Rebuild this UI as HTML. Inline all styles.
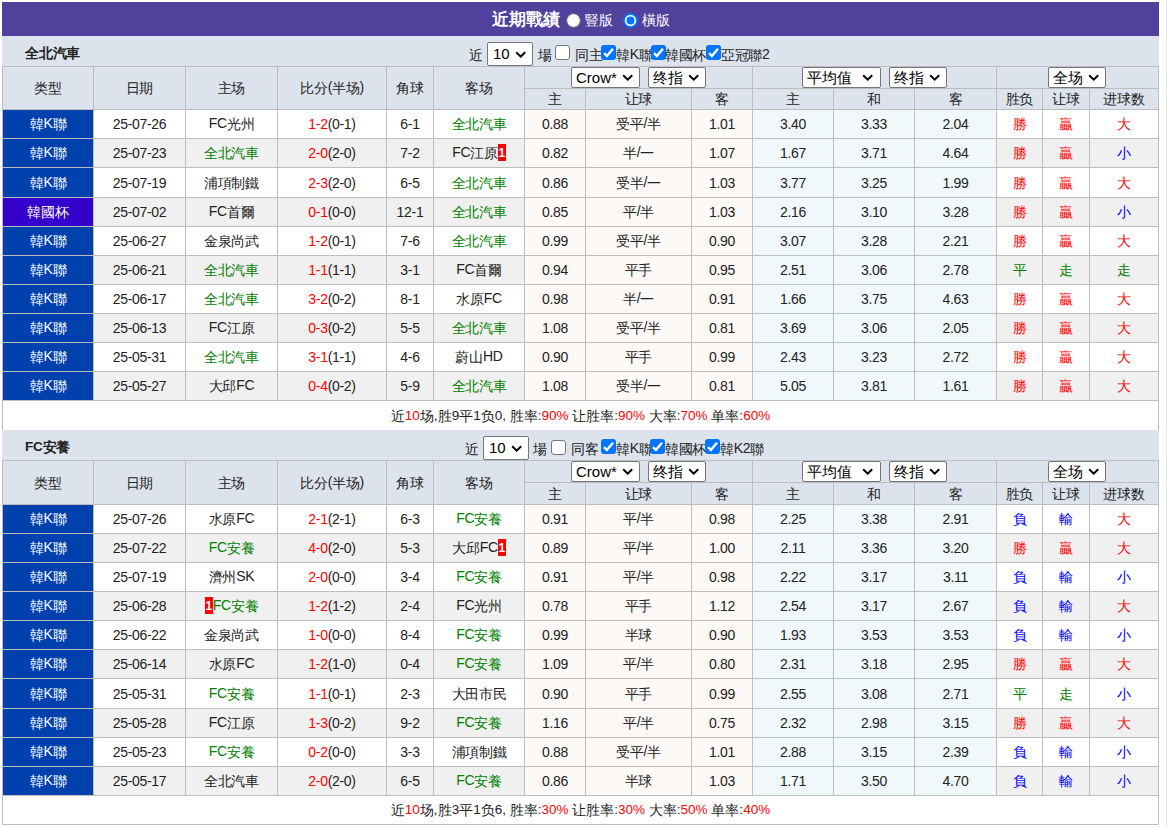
<!DOCTYPE html>
<html><head><meta charset="utf-8"><style>
html,body{margin:0;padding:0;background:#fff;width:1167px;height:827px;overflow:hidden;position:relative}
body{font-family:"Liberation Sans",sans-serif;font-size:14px;letter-spacing:-0.3px;color:#222}
.t{position:absolute;display:flex;align-items:center;justify-content:center;white-space:nowrap}
.sel{position:absolute;background:#fff;border:1px solid #767676;border-radius:2px;font-size:15px;letter-spacing:0;color:#000}
.c{position:relative;top:1px}
.rc{display:inline-block;vertical-align:top;background:#ff0000;color:#fff;font-weight:bold;font-size:12px;width:8px;height:17px;line-height:18px;text-align:center;position:relative;top:0px}
</style></head><body>
<div style="position:absolute;left:2px;top:2px;width:1157px;height:34px;background:#51409c;"></div><div class="t" style="left:492px;top:1px;width:70px;height:34px;color:#fff;font-size:17px;letter-spacing:0;justify-content:flex-start;"><span><b><span class="c">近期戰績</span></b></span></div><svg style="position:absolute;left:566px;top:13px" width="15" height="15" viewBox="0 0 15 15"><circle cx="7.5" cy="7.5" r="6.8" fill="#fff" stroke="#767676" stroke-width="1"/></svg><div class="t" style="left:585px;top:2px;width:35px;height:34px;color:#fff;justify-content:flex-start;padding-top:2px;box-sizing:border-box"><span><span class="c">豎版</span></span></div><svg style="position:absolute;left:623px;top:13px" width="15" height="15" viewBox="0 0 15 15"><circle cx="7.5" cy="7.5" r="6.6" fill="#fff" stroke="#0075ff" stroke-width="1.8"/><circle cx="7.5" cy="7.5" r="4" fill="#0075ff"/></svg><div class="t" style="left:642px;top:2px;width:38px;height:34px;color:#fff;justify-content:flex-start;padding-top:2px;box-sizing:border-box"><span><span class="c">橫版</span></span></div><div style="position:absolute;left:2px;top:36px;width:1157px;height:30px;background:#dce3ec;"></div><div class="t" style="left:25px;top:38px;width:175px;height:30px;color:#222;justify-content:flex-start;font-size:13.5px;letter-spacing:-0.2px;"><span><b><span class="c">全北汽車</span></b></span></div><div class="t" style="left:469px;top:36px;width:15px;height:30px;color:#222;justify-content:flex-start;padding-top:8px;box-sizing:border-box"><span><span class="c">近</span></span></div><div class="sel" style="left:487px;top:42px;width:44px;height:22px;"><span style="position:absolute;left:5px;top:0;line-height:22px">10</span></div><svg style="position:absolute;left:514.5px;top:51px" width="12" height="8" viewBox="0 0 12 8"><path d="M1.2 1.2 L5.7 5.7 L10.2 1.2" fill="none" stroke="#000" stroke-width="2"/></svg><div class="t" style="left:538px;top:36px;width:16px;height:30px;color:#222;justify-content:flex-start;padding-top:8px;box-sizing:border-box"><span><span class="c">場</span></span></div><div style="position:absolute;left:555px;top:45px;width:13px;height:13px;border-radius:3px;background:#fff;border:1px solid #767676"></div><div class="t" style="left:575px;top:36px;width:27px;height:30px;color:#222;justify-content:flex-start;padding-top:8px;box-sizing:border-box"><span><span class="c">同主</span></span></div><div style="position:absolute;left:601px;top:45px;width:15px;height:15px;border-radius:3px;background:#0075ff"><svg width="15" height="15" viewBox="0 0 15 15" style="position:absolute;left:0;top:0"><path d="M3.1 8.1 L5.9 11 L12 3.7" fill="none" stroke="#fff" stroke-width="2.4"/></svg></div><div class="t" style="left:616px;top:36px;width:36px;height:30px;color:#222;justify-content:flex-start;padding-top:8px;box-sizing:border-box"><span><span class="c">韓</span>K<span class="c">聯</span></span></div><div style="position:absolute;left:651px;top:45px;width:15px;height:15px;border-radius:3px;background:#0075ff"><svg width="15" height="15" viewBox="0 0 15 15" style="position:absolute;left:0;top:0"><path d="M3.1 8.1 L5.9 11 L12 3.7" fill="none" stroke="#fff" stroke-width="2.4"/></svg></div><div class="t" style="left:665px;top:36px;width:43px;height:30px;color:#222;justify-content:flex-start;padding-top:8px;box-sizing:border-box"><span><span class="c">韓國杯</span></span></div><div style="position:absolute;left:706px;top:45px;width:15px;height:15px;border-radius:3px;background:#0075ff"><svg width="15" height="15" viewBox="0 0 15 15" style="position:absolute;left:0;top:0"><path d="M3.1 8.1 L5.9 11 L12 3.7" fill="none" stroke="#fff" stroke-width="2.4"/></svg></div><div class="t" style="left:721px;top:36px;width:59px;height:30px;color:#222;justify-content:flex-start;padding-top:8px;box-sizing:border-box"><span><span class="c">亞冠聯</span>2</span></div><div style="position:absolute;left:2px;top:66px;width:1157px;height:43px;background:#dce3ec;"></div><div style="position:absolute;left:2px;top:110px;width:1157px;height:28px;background:#fff;"></div><div style="position:absolute;left:525px;top:110px;width:227px;height:28px;background:#fdf9f6;"></div><div style="position:absolute;left:753px;top:110px;width:243px;height:28px;background:#f0f8fc;"></div><div style="position:absolute;left:3px;top:110px;width:90px;height:28px;background:#0041ae;"></div><div style="position:absolute;left:2px;top:139px;width:1157px;height:28px;background:#f0f0f0;"></div><div style="position:absolute;left:525px;top:139px;width:227px;height:28px;background:#fdf9f6;"></div><div style="position:absolute;left:753px;top:139px;width:243px;height:28px;background:#f0f8fc;"></div><div style="position:absolute;left:3px;top:139px;width:90px;height:28px;background:#0041ae;"></div><div style="position:absolute;left:2px;top:168px;width:1157px;height:29px;background:#fff;"></div><div style="position:absolute;left:525px;top:168px;width:227px;height:29px;background:#fdf9f6;"></div><div style="position:absolute;left:753px;top:168px;width:243px;height:29px;background:#f0f8fc;"></div><div style="position:absolute;left:3px;top:168px;width:90px;height:29px;background:#0041ae;"></div><div style="position:absolute;left:2px;top:198px;width:1157px;height:28px;background:#f0f0f0;"></div><div style="position:absolute;left:525px;top:198px;width:227px;height:28px;background:#fdf9f6;"></div><div style="position:absolute;left:753px;top:198px;width:243px;height:28px;background:#f0f8fc;"></div><div style="position:absolute;left:3px;top:198px;width:90px;height:28px;background:#3300cc;"></div><div style="position:absolute;left:2px;top:227px;width:1157px;height:28px;background:#fff;"></div><div style="position:absolute;left:525px;top:227px;width:227px;height:28px;background:#fdf9f6;"></div><div style="position:absolute;left:753px;top:227px;width:243px;height:28px;background:#f0f8fc;"></div><div style="position:absolute;left:3px;top:227px;width:90px;height:28px;background:#0041ae;"></div><div style="position:absolute;left:2px;top:256px;width:1157px;height:28px;background:#f0f0f0;"></div><div style="position:absolute;left:525px;top:256px;width:227px;height:28px;background:#fdf9f6;"></div><div style="position:absolute;left:753px;top:256px;width:243px;height:28px;background:#f0f8fc;"></div><div style="position:absolute;left:3px;top:256px;width:90px;height:28px;background:#0041ae;"></div><div style="position:absolute;left:2px;top:285px;width:1157px;height:28px;background:#fff;"></div><div style="position:absolute;left:525px;top:285px;width:227px;height:28px;background:#fdf9f6;"></div><div style="position:absolute;left:753px;top:285px;width:243px;height:28px;background:#f0f8fc;"></div><div style="position:absolute;left:3px;top:285px;width:90px;height:28px;background:#0041ae;"></div><div style="position:absolute;left:2px;top:314px;width:1157px;height:28px;background:#f0f0f0;"></div><div style="position:absolute;left:525px;top:314px;width:227px;height:28px;background:#fdf9f6;"></div><div style="position:absolute;left:753px;top:314px;width:243px;height:28px;background:#f0f8fc;"></div><div style="position:absolute;left:3px;top:314px;width:90px;height:28px;background:#0041ae;"></div><div style="position:absolute;left:2px;top:343px;width:1157px;height:28px;background:#fff;"></div><div style="position:absolute;left:525px;top:343px;width:227px;height:28px;background:#fdf9f6;"></div><div style="position:absolute;left:753px;top:343px;width:243px;height:28px;background:#f0f8fc;"></div><div style="position:absolute;left:3px;top:343px;width:90px;height:28px;background:#0041ae;"></div><div style="position:absolute;left:2px;top:372px;width:1157px;height:28px;background:#f0f0f0;"></div><div style="position:absolute;left:525px;top:372px;width:227px;height:28px;background:#fdf9f6;"></div><div style="position:absolute;left:753px;top:372px;width:243px;height:28px;background:#f0f8fc;"></div><div style="position:absolute;left:3px;top:372px;width:90px;height:28px;background:#0041ae;"></div><div style="position:absolute;left:2px;top:401px;width:1157px;height:29px;background:#fff;"></div><div style="position:absolute;left:2px;top:66px;width:1157px;height:1px;background:#bdbdbd;"></div><div style="position:absolute;left:2px;top:109px;width:1157px;height:1px;background:#bdbdbd;"></div><div style="position:absolute;left:2px;top:138px;width:1157px;height:1px;background:#bdbdbd;"></div><div style="position:absolute;left:2px;top:167px;width:1157px;height:1px;background:#bdbdbd;"></div><div style="position:absolute;left:2px;top:197px;width:1157px;height:1px;background:#bdbdbd;"></div><div style="position:absolute;left:2px;top:226px;width:1157px;height:1px;background:#bdbdbd;"></div><div style="position:absolute;left:2px;top:255px;width:1157px;height:1px;background:#bdbdbd;"></div><div style="position:absolute;left:2px;top:284px;width:1157px;height:1px;background:#bdbdbd;"></div><div style="position:absolute;left:2px;top:313px;width:1157px;height:1px;background:#bdbdbd;"></div><div style="position:absolute;left:2px;top:342px;width:1157px;height:1px;background:#bdbdbd;"></div><div style="position:absolute;left:2px;top:371px;width:1157px;height:1px;background:#bdbdbd;"></div><div style="position:absolute;left:2px;top:400px;width:1157px;height:1px;background:#bdbdbd;"></div><div style="position:absolute;left:2px;top:430px;width:1157px;height:1px;background:#bdbdbd;"></div><div style="position:absolute;left:524px;top:88px;width:635px;height:1px;background:#bdbdbd;"></div><div style="position:absolute;left:2px;top:66px;width:1px;height:364px;background:#bdbdbd;"></div><div style="position:absolute;left:93px;top:66px;width:1px;height:334px;background:#bdbdbd;"></div><div style="position:absolute;left:185px;top:66px;width:1px;height:334px;background:#bdbdbd;"></div><div style="position:absolute;left:277px;top:66px;width:1px;height:334px;background:#bdbdbd;"></div><div style="position:absolute;left:386px;top:66px;width:1px;height:334px;background:#bdbdbd;"></div><div style="position:absolute;left:433px;top:66px;width:1px;height:334px;background:#bdbdbd;"></div><div style="position:absolute;left:524px;top:66px;width:1px;height:334px;background:#bdbdbd;"></div><div style="position:absolute;left:585px;top:88px;width:1px;height:312px;background:#bdbdbd;"></div><div style="position:absolute;left:691px;top:88px;width:1px;height:312px;background:#bdbdbd;"></div><div style="position:absolute;left:752px;top:66px;width:1px;height:334px;background:#bdbdbd;"></div><div style="position:absolute;left:833px;top:88px;width:1px;height:312px;background:#bdbdbd;"></div><div style="position:absolute;left:914px;top:88px;width:1px;height:312px;background:#bdbdbd;"></div><div style="position:absolute;left:996px;top:66px;width:1px;height:334px;background:#bdbdbd;"></div><div style="position:absolute;left:1042px;top:88px;width:1px;height:312px;background:#bdbdbd;"></div><div style="position:absolute;left:1089px;top:88px;width:1px;height:312px;background:#bdbdbd;"></div><div style="position:absolute;left:1158px;top:66px;width:1px;height:364px;background:#bdbdbd;"></div><div class="t" style="left:3px;top:67px;width:90px;height:42px;color:#222;"><span><span class="c">类型</span></span></div><div class="t" style="left:94px;top:67px;width:91px;height:42px;color:#222;"><span><span class="c">日期</span></span></div><div class="t" style="left:186px;top:67px;width:91px;height:42px;color:#222;"><span><span class="c">主场</span></span></div><div class="t" style="left:278px;top:67px;width:108px;height:42px;color:#222;"><span><span class="c">比分</span>(<span class="c">半场</span>)</span></div><div class="t" style="left:387px;top:67px;width:46px;height:42px;color:#222;"><span><span class="c">角球</span></span></div><div class="t" style="left:434px;top:67px;width:90px;height:42px;color:#222;"><span><span class="c">客场</span></span></div><div class="t" style="left:525px;top:89px;width:60px;height:20px;color:#222;"><span><span class="c">主</span></span></div><div class="t" style="left:586px;top:89px;width:105px;height:20px;color:#222;"><span><span class="c">让球</span></span></div><div class="t" style="left:692px;top:89px;width:60px;height:20px;color:#222;"><span><span class="c">客</span></span></div><div class="t" style="left:753px;top:89px;width:80px;height:20px;color:#222;"><span><span class="c">主</span></span></div><div class="t" style="left:834px;top:89px;width:80px;height:20px;color:#222;"><span><span class="c">和</span></span></div><div class="t" style="left:915px;top:89px;width:81px;height:20px;color:#222;"><span><span class="c">客</span></span></div><div class="t" style="left:997px;top:89px;width:45px;height:20px;color:#222;"><span><span class="c">胜负</span></span></div><div class="t" style="left:1043px;top:89px;width:46px;height:20px;color:#222;"><span><span class="c">让球</span></span></div><div class="t" style="left:1090px;top:89px;width:68px;height:20px;color:#222;"><span><span class="c">进球数</span></span></div><div class="sel" style="left:571px;top:67px;width:67px;height:19px;"><span style="position:absolute;left:4px;top:0;line-height:19px">Crow*</span></div><svg style="position:absolute;left:621.5px;top:74px" width="12" height="8" viewBox="0 0 12 8"><path d="M1.2 1.2 L5.7 5.7 L10.2 1.2" fill="none" stroke="#000" stroke-width="2"/></svg><div class="sel" style="left:648px;top:67px;width:56px;height:19px;"><span style="position:absolute;left:4px;top:0;line-height:19px">终指</span></div><svg style="position:absolute;left:687.5px;top:74px" width="12" height="8" viewBox="0 0 12 8"><path d="M1.2 1.2 L5.7 5.7 L10.2 1.2" fill="none" stroke="#000" stroke-width="2"/></svg><div class="sel" style="left:802px;top:67px;width:77px;height:19px;"><span style="position:absolute;left:4px;top:0;line-height:19px">平均值</span></div><svg style="position:absolute;left:861.5px;top:74px" width="12" height="8" viewBox="0 0 12 8"><path d="M1.2 1.2 L5.7 5.7 L10.2 1.2" fill="none" stroke="#000" stroke-width="2"/></svg><div class="sel" style="left:889px;top:67px;width:56px;height:19px;"><span style="position:absolute;left:4px;top:0;line-height:19px">终指</span></div><svg style="position:absolute;left:928.5px;top:74px" width="12" height="8" viewBox="0 0 12 8"><path d="M1.2 1.2 L5.7 5.7 L10.2 1.2" fill="none" stroke="#000" stroke-width="2"/></svg><div class="sel" style="left:1048px;top:67px;width:56px;height:19px;"><span style="position:absolute;left:4px;top:0;line-height:19px">全场</span></div><svg style="position:absolute;left:1087.5px;top:74px" width="12" height="8" viewBox="0 0 12 8"><path d="M1.2 1.2 L5.7 5.7 L10.2 1.2" fill="none" stroke="#000" stroke-width="2"/></svg><div class="t" style="left:3px;top:110px;width:90px;height:28px;color:#fff;"><span><span class="c">韓</span>K<span class="c">聯</span></span></div><div class="t" style="left:94px;top:110px;width:91px;height:28px;color:#222;"><span>25-07-26</span></div><div class="t" style="left:186px;top:110px;width:91px;height:28px;color:#222;"><span>FC<span class="c">光州</span></span></div><div class="t" style="left:278px;top:110px;width:108px;height:28px;color:#222;"><span><span style="color:#ff0000">1-2</span>(0-1)</span></div><div class="t" style="left:387px;top:110px;width:46px;height:28px;color:#222;"><span>6-1</span></div><div class="t" style="left:434px;top:110px;width:90px;height:28px;color:#008000;"><span><span class="c">全北汽車</span></span></div><div class="t" style="left:525px;top:110px;width:60px;height:28px;color:#222;"><span>0.88</span></div><div class="t" style="left:586px;top:110px;width:105px;height:28px;color:#222;"><span><span class="c">受平</span>/<span class="c">半</span></span></div><div class="t" style="left:692px;top:110px;width:60px;height:28px;color:#222;"><span>1.01</span></div><div class="t" style="left:753px;top:110px;width:80px;height:28px;color:#222;"><span>3.40</span></div><div class="t" style="left:834px;top:110px;width:80px;height:28px;color:#222;"><span>3.33</span></div><div class="t" style="left:915px;top:110px;width:81px;height:28px;color:#222;"><span>2.04</span></div><div class="t" style="left:997px;top:110px;width:45px;height:28px;color:#ff0000;"><span><span class="c">勝</span></span></div><div class="t" style="left:1043px;top:110px;width:46px;height:28px;color:#ff0000;"><span><span class="c">贏</span></span></div><div class="t" style="left:1090px;top:110px;width:68px;height:28px;color:#ff0000;"><span><span class="c">大</span></span></div><div class="t" style="left:3px;top:139px;width:90px;height:28px;color:#fff;"><span><span class="c">韓</span>K<span class="c">聯</span></span></div><div class="t" style="left:94px;top:139px;width:91px;height:28px;color:#222;"><span>25-07-23</span></div><div class="t" style="left:186px;top:139px;width:91px;height:28px;color:#008000;"><span><span class="c">全北汽車</span></span></div><div class="t" style="left:278px;top:139px;width:108px;height:28px;color:#222;"><span><span style="color:#ff0000">2-0</span>(2-0)</span></div><div class="t" style="left:387px;top:139px;width:46px;height:28px;color:#222;"><span>7-2</span></div><div class="t" style="left:434px;top:139px;width:90px;height:28px;color:#222;"><span>FC<span class="c">江原</span><span class="rc">1</span></span></div><div class="t" style="left:525px;top:139px;width:60px;height:28px;color:#222;"><span>0.82</span></div><div class="t" style="left:586px;top:139px;width:105px;height:28px;color:#222;"><span><span class="c">半</span>/<span class="c">一</span></span></div><div class="t" style="left:692px;top:139px;width:60px;height:28px;color:#222;"><span>1.07</span></div><div class="t" style="left:753px;top:139px;width:80px;height:28px;color:#222;"><span>1.67</span></div><div class="t" style="left:834px;top:139px;width:80px;height:28px;color:#222;"><span>3.71</span></div><div class="t" style="left:915px;top:139px;width:81px;height:28px;color:#222;"><span>4.64</span></div><div class="t" style="left:997px;top:139px;width:45px;height:28px;color:#ff0000;"><span><span class="c">勝</span></span></div><div class="t" style="left:1043px;top:139px;width:46px;height:28px;color:#ff0000;"><span><span class="c">贏</span></span></div><div class="t" style="left:1090px;top:139px;width:68px;height:28px;color:#0000ff;"><span><span class="c">小</span></span></div><div class="t" style="left:3px;top:168px;width:90px;height:29px;color:#fff;"><span><span class="c">韓</span>K<span class="c">聯</span></span></div><div class="t" style="left:94px;top:168px;width:91px;height:29px;color:#222;"><span>25-07-19</span></div><div class="t" style="left:186px;top:168px;width:91px;height:29px;color:#222;"><span><span class="c">浦項制鐵</span></span></div><div class="t" style="left:278px;top:168px;width:108px;height:29px;color:#222;"><span><span style="color:#ff0000">2-3</span>(2-0)</span></div><div class="t" style="left:387px;top:168px;width:46px;height:29px;color:#222;"><span>6-5</span></div><div class="t" style="left:434px;top:168px;width:90px;height:29px;color:#008000;"><span><span class="c">全北汽車</span></span></div><div class="t" style="left:525px;top:168px;width:60px;height:29px;color:#222;"><span>0.86</span></div><div class="t" style="left:586px;top:168px;width:105px;height:29px;color:#222;"><span><span class="c">受半</span>/<span class="c">一</span></span></div><div class="t" style="left:692px;top:168px;width:60px;height:29px;color:#222;"><span>1.03</span></div><div class="t" style="left:753px;top:168px;width:80px;height:29px;color:#222;"><span>3.77</span></div><div class="t" style="left:834px;top:168px;width:80px;height:29px;color:#222;"><span>3.25</span></div><div class="t" style="left:915px;top:168px;width:81px;height:29px;color:#222;"><span>1.99</span></div><div class="t" style="left:997px;top:168px;width:45px;height:29px;color:#ff0000;"><span><span class="c">勝</span></span></div><div class="t" style="left:1043px;top:168px;width:46px;height:29px;color:#ff0000;"><span><span class="c">贏</span></span></div><div class="t" style="left:1090px;top:168px;width:68px;height:29px;color:#ff0000;"><span><span class="c">大</span></span></div><div class="t" style="left:3px;top:198px;width:90px;height:28px;color:#fff;"><span><span class="c">韓國杯</span></span></div><div class="t" style="left:94px;top:198px;width:91px;height:28px;color:#222;"><span>25-07-02</span></div><div class="t" style="left:186px;top:198px;width:91px;height:28px;color:#222;"><span>FC<span class="c">首爾</span></span></div><div class="t" style="left:278px;top:198px;width:108px;height:28px;color:#222;"><span><span style="color:#ff0000">0-1</span>(0-0)</span></div><div class="t" style="left:387px;top:198px;width:46px;height:28px;color:#222;"><span>12-1</span></div><div class="t" style="left:434px;top:198px;width:90px;height:28px;color:#008000;"><span><span class="c">全北汽車</span></span></div><div class="t" style="left:525px;top:198px;width:60px;height:28px;color:#222;"><span>0.85</span></div><div class="t" style="left:586px;top:198px;width:105px;height:28px;color:#222;"><span><span class="c">平</span>/<span class="c">半</span></span></div><div class="t" style="left:692px;top:198px;width:60px;height:28px;color:#222;"><span>1.03</span></div><div class="t" style="left:753px;top:198px;width:80px;height:28px;color:#222;"><span>2.16</span></div><div class="t" style="left:834px;top:198px;width:80px;height:28px;color:#222;"><span>3.10</span></div><div class="t" style="left:915px;top:198px;width:81px;height:28px;color:#222;"><span>3.28</span></div><div class="t" style="left:997px;top:198px;width:45px;height:28px;color:#ff0000;"><span><span class="c">勝</span></span></div><div class="t" style="left:1043px;top:198px;width:46px;height:28px;color:#ff0000;"><span><span class="c">贏</span></span></div><div class="t" style="left:1090px;top:198px;width:68px;height:28px;color:#0000ff;"><span><span class="c">小</span></span></div><div class="t" style="left:3px;top:227px;width:90px;height:28px;color:#fff;"><span><span class="c">韓</span>K<span class="c">聯</span></span></div><div class="t" style="left:94px;top:227px;width:91px;height:28px;color:#222;"><span>25-06-27</span></div><div class="t" style="left:186px;top:227px;width:91px;height:28px;color:#222;"><span><span class="c">金泉尚武</span></span></div><div class="t" style="left:278px;top:227px;width:108px;height:28px;color:#222;"><span><span style="color:#ff0000">1-2</span>(0-1)</span></div><div class="t" style="left:387px;top:227px;width:46px;height:28px;color:#222;"><span>7-6</span></div><div class="t" style="left:434px;top:227px;width:90px;height:28px;color:#008000;"><span><span class="c">全北汽車</span></span></div><div class="t" style="left:525px;top:227px;width:60px;height:28px;color:#222;"><span>0.99</span></div><div class="t" style="left:586px;top:227px;width:105px;height:28px;color:#222;"><span><span class="c">受平</span>/<span class="c">半</span></span></div><div class="t" style="left:692px;top:227px;width:60px;height:28px;color:#222;"><span>0.90</span></div><div class="t" style="left:753px;top:227px;width:80px;height:28px;color:#222;"><span>3.07</span></div><div class="t" style="left:834px;top:227px;width:80px;height:28px;color:#222;"><span>3.28</span></div><div class="t" style="left:915px;top:227px;width:81px;height:28px;color:#222;"><span>2.21</span></div><div class="t" style="left:997px;top:227px;width:45px;height:28px;color:#ff0000;"><span><span class="c">勝</span></span></div><div class="t" style="left:1043px;top:227px;width:46px;height:28px;color:#ff0000;"><span><span class="c">贏</span></span></div><div class="t" style="left:1090px;top:227px;width:68px;height:28px;color:#ff0000;"><span><span class="c">大</span></span></div><div class="t" style="left:3px;top:256px;width:90px;height:28px;color:#fff;"><span><span class="c">韓</span>K<span class="c">聯</span></span></div><div class="t" style="left:94px;top:256px;width:91px;height:28px;color:#222;"><span>25-06-21</span></div><div class="t" style="left:186px;top:256px;width:91px;height:28px;color:#008000;"><span><span class="c">全北汽車</span></span></div><div class="t" style="left:278px;top:256px;width:108px;height:28px;color:#222;"><span><span style="color:#ff0000">1-1</span>(1-1)</span></div><div class="t" style="left:387px;top:256px;width:46px;height:28px;color:#222;"><span>3-1</span></div><div class="t" style="left:434px;top:256px;width:90px;height:28px;color:#222;"><span>FC<span class="c">首爾</span></span></div><div class="t" style="left:525px;top:256px;width:60px;height:28px;color:#222;"><span>0.94</span></div><div class="t" style="left:586px;top:256px;width:105px;height:28px;color:#222;"><span><span class="c">平手</span></span></div><div class="t" style="left:692px;top:256px;width:60px;height:28px;color:#222;"><span>0.95</span></div><div class="t" style="left:753px;top:256px;width:80px;height:28px;color:#222;"><span>2.51</span></div><div class="t" style="left:834px;top:256px;width:80px;height:28px;color:#222;"><span>3.06</span></div><div class="t" style="left:915px;top:256px;width:81px;height:28px;color:#222;"><span>2.78</span></div><div class="t" style="left:997px;top:256px;width:45px;height:28px;color:#008000;"><span><span class="c">平</span></span></div><div class="t" style="left:1043px;top:256px;width:46px;height:28px;color:#008000;"><span><span class="c">走</span></span></div><div class="t" style="left:1090px;top:256px;width:68px;height:28px;color:#008000;"><span><span class="c">走</span></span></div><div class="t" style="left:3px;top:285px;width:90px;height:28px;color:#fff;"><span><span class="c">韓</span>K<span class="c">聯</span></span></div><div class="t" style="left:94px;top:285px;width:91px;height:28px;color:#222;"><span>25-06-17</span></div><div class="t" style="left:186px;top:285px;width:91px;height:28px;color:#008000;"><span><span class="c">全北汽車</span></span></div><div class="t" style="left:278px;top:285px;width:108px;height:28px;color:#222;"><span><span style="color:#ff0000">3-2</span>(0-2)</span></div><div class="t" style="left:387px;top:285px;width:46px;height:28px;color:#222;"><span>8-1</span></div><div class="t" style="left:434px;top:285px;width:90px;height:28px;color:#222;"><span><span class="c">水原</span>FC</span></div><div class="t" style="left:525px;top:285px;width:60px;height:28px;color:#222;"><span>0.98</span></div><div class="t" style="left:586px;top:285px;width:105px;height:28px;color:#222;"><span><span class="c">半</span>/<span class="c">一</span></span></div><div class="t" style="left:692px;top:285px;width:60px;height:28px;color:#222;"><span>0.91</span></div><div class="t" style="left:753px;top:285px;width:80px;height:28px;color:#222;"><span>1.66</span></div><div class="t" style="left:834px;top:285px;width:80px;height:28px;color:#222;"><span>3.75</span></div><div class="t" style="left:915px;top:285px;width:81px;height:28px;color:#222;"><span>4.63</span></div><div class="t" style="left:997px;top:285px;width:45px;height:28px;color:#ff0000;"><span><span class="c">勝</span></span></div><div class="t" style="left:1043px;top:285px;width:46px;height:28px;color:#ff0000;"><span><span class="c">贏</span></span></div><div class="t" style="left:1090px;top:285px;width:68px;height:28px;color:#ff0000;"><span><span class="c">大</span></span></div><div class="t" style="left:3px;top:314px;width:90px;height:28px;color:#fff;"><span><span class="c">韓</span>K<span class="c">聯</span></span></div><div class="t" style="left:94px;top:314px;width:91px;height:28px;color:#222;"><span>25-06-13</span></div><div class="t" style="left:186px;top:314px;width:91px;height:28px;color:#222;"><span>FC<span class="c">江原</span></span></div><div class="t" style="left:278px;top:314px;width:108px;height:28px;color:#222;"><span><span style="color:#ff0000">0-3</span>(0-2)</span></div><div class="t" style="left:387px;top:314px;width:46px;height:28px;color:#222;"><span>5-5</span></div><div class="t" style="left:434px;top:314px;width:90px;height:28px;color:#008000;"><span><span class="c">全北汽車</span></span></div><div class="t" style="left:525px;top:314px;width:60px;height:28px;color:#222;"><span>1.08</span></div><div class="t" style="left:586px;top:314px;width:105px;height:28px;color:#222;"><span><span class="c">受平</span>/<span class="c">半</span></span></div><div class="t" style="left:692px;top:314px;width:60px;height:28px;color:#222;"><span>0.81</span></div><div class="t" style="left:753px;top:314px;width:80px;height:28px;color:#222;"><span>3.69</span></div><div class="t" style="left:834px;top:314px;width:80px;height:28px;color:#222;"><span>3.06</span></div><div class="t" style="left:915px;top:314px;width:81px;height:28px;color:#222;"><span>2.05</span></div><div class="t" style="left:997px;top:314px;width:45px;height:28px;color:#ff0000;"><span><span class="c">勝</span></span></div><div class="t" style="left:1043px;top:314px;width:46px;height:28px;color:#ff0000;"><span><span class="c">贏</span></span></div><div class="t" style="left:1090px;top:314px;width:68px;height:28px;color:#ff0000;"><span><span class="c">大</span></span></div><div class="t" style="left:3px;top:343px;width:90px;height:28px;color:#fff;"><span><span class="c">韓</span>K<span class="c">聯</span></span></div><div class="t" style="left:94px;top:343px;width:91px;height:28px;color:#222;"><span>25-05-31</span></div><div class="t" style="left:186px;top:343px;width:91px;height:28px;color:#008000;"><span><span class="c">全北汽車</span></span></div><div class="t" style="left:278px;top:343px;width:108px;height:28px;color:#222;"><span><span style="color:#ff0000">3-1</span>(1-1)</span></div><div class="t" style="left:387px;top:343px;width:46px;height:28px;color:#222;"><span>4-6</span></div><div class="t" style="left:434px;top:343px;width:90px;height:28px;color:#222;"><span><span class="c">蔚山</span>HD</span></div><div class="t" style="left:525px;top:343px;width:60px;height:28px;color:#222;"><span>0.90</span></div><div class="t" style="left:586px;top:343px;width:105px;height:28px;color:#222;"><span><span class="c">平手</span></span></div><div class="t" style="left:692px;top:343px;width:60px;height:28px;color:#222;"><span>0.99</span></div><div class="t" style="left:753px;top:343px;width:80px;height:28px;color:#222;"><span>2.43</span></div><div class="t" style="left:834px;top:343px;width:80px;height:28px;color:#222;"><span>3.23</span></div><div class="t" style="left:915px;top:343px;width:81px;height:28px;color:#222;"><span>2.72</span></div><div class="t" style="left:997px;top:343px;width:45px;height:28px;color:#ff0000;"><span><span class="c">勝</span></span></div><div class="t" style="left:1043px;top:343px;width:46px;height:28px;color:#ff0000;"><span><span class="c">贏</span></span></div><div class="t" style="left:1090px;top:343px;width:68px;height:28px;color:#ff0000;"><span><span class="c">大</span></span></div><div class="t" style="left:3px;top:372px;width:90px;height:28px;color:#fff;"><span><span class="c">韓</span>K<span class="c">聯</span></span></div><div class="t" style="left:94px;top:372px;width:91px;height:28px;color:#222;"><span>25-05-27</span></div><div class="t" style="left:186px;top:372px;width:91px;height:28px;color:#222;"><span><span class="c">大邱</span>FC</span></div><div class="t" style="left:278px;top:372px;width:108px;height:28px;color:#222;"><span><span style="color:#ff0000">0-4</span>(0-2)</span></div><div class="t" style="left:387px;top:372px;width:46px;height:28px;color:#222;"><span>5-9</span></div><div class="t" style="left:434px;top:372px;width:90px;height:28px;color:#008000;"><span><span class="c">全北汽車</span></span></div><div class="t" style="left:525px;top:372px;width:60px;height:28px;color:#222;"><span>1.08</span></div><div class="t" style="left:586px;top:372px;width:105px;height:28px;color:#222;"><span><span class="c">受半</span>/<span class="c">一</span></span></div><div class="t" style="left:692px;top:372px;width:60px;height:28px;color:#222;"><span>0.81</span></div><div class="t" style="left:753px;top:372px;width:80px;height:28px;color:#222;"><span>5.05</span></div><div class="t" style="left:834px;top:372px;width:80px;height:28px;color:#222;"><span>3.81</span></div><div class="t" style="left:915px;top:372px;width:81px;height:28px;color:#222;"><span>1.61</span></div><div class="t" style="left:997px;top:372px;width:45px;height:28px;color:#ff0000;"><span><span class="c">勝</span></span></div><div class="t" style="left:1043px;top:372px;width:46px;height:28px;color:#ff0000;"><span><span class="c">贏</span></span></div><div class="t" style="left:1090px;top:372px;width:68px;height:28px;color:#ff0000;"><span><span class="c">大</span></span></div><div class="t" style="left:3px;top:401px;width:1155px;height:29px;color:#222;font-size:13.5px;letter-spacing:0;"><span><span class="c">近</span><span style="color:#ff0000">10</span><span class="c">场</span>,<span class="c">胜</span>9<span class="c">平</span>1<span class="c">负</span>0, <span class="c">胜率</span>:<span style="color:#ff0000">90%</span> <span class="c">让胜率</span>:<span style="color:#ff0000">90%</span> <span class="c">大率</span>:<span style="color:#ff0000">70%</span> <span class="c">单率</span>:<span style="color:#ff0000">60%</span></span></div><div style="position:absolute;left:2px;top:430px;width:1157px;height:30px;background:#dce3ec;"></div><div class="t" style="left:25px;top:432px;width:175px;height:30px;color:#222;justify-content:flex-start;font-size:13.5px;letter-spacing:-0.2px;"><span><b>FC<span class="c">安養</span></b></span></div><div class="t" style="left:465px;top:430px;width:15px;height:30px;color:#222;justify-content:flex-start;padding-top:8px;box-sizing:border-box"><span><span class="c">近</span></span></div><div class="sel" style="left:483px;top:436px;width:44px;height:22px;"><span style="position:absolute;left:5px;top:0;line-height:22px">10</span></div><svg style="position:absolute;left:510.5px;top:445px" width="12" height="8" viewBox="0 0 12 8"><path d="M1.2 1.2 L5.7 5.7 L10.2 1.2" fill="none" stroke="#000" stroke-width="2"/></svg><div class="t" style="left:533px;top:430px;width:17px;height:30px;color:#222;justify-content:flex-start;padding-top:8px;box-sizing:border-box"><span><span class="c">場</span></span></div><div style="position:absolute;left:551px;top:440px;width:13px;height:13px;border-radius:3px;background:#fff;border:1px solid #767676"></div><div class="t" style="left:571px;top:430px;width:29px;height:30px;color:#222;justify-content:flex-start;padding-top:8px;box-sizing:border-box"><span><span class="c">同客</span></span></div><div style="position:absolute;left:601px;top:439px;width:15px;height:15px;border-radius:3px;background:#0075ff"><svg width="15" height="15" viewBox="0 0 15 15" style="position:absolute;left:0;top:0"><path d="M3.1 8.1 L5.9 11 L12 3.7" fill="none" stroke="#fff" stroke-width="2.4"/></svg></div><div class="t" style="left:616px;top:430px;width:36px;height:30px;color:#222;justify-content:flex-start;padding-top:8px;box-sizing:border-box"><span><span class="c">韓</span>K<span class="c">聯</span></span></div><div style="position:absolute;left:650px;top:439px;width:15px;height:15px;border-radius:3px;background:#0075ff"><svg width="15" height="15" viewBox="0 0 15 15" style="position:absolute;left:0;top:0"><path d="M3.1 8.1 L5.9 11 L12 3.7" fill="none" stroke="#fff" stroke-width="2.4"/></svg></div><div class="t" style="left:665px;top:430px;width:43px;height:30px;color:#222;justify-content:flex-start;padding-top:8px;box-sizing:border-box"><span><span class="c">韓國杯</span></span></div><div style="position:absolute;left:705px;top:439px;width:15px;height:15px;border-radius:3px;background:#0075ff"><svg width="15" height="15" viewBox="0 0 15 15" style="position:absolute;left:0;top:0"><path d="M3.1 8.1 L5.9 11 L12 3.7" fill="none" stroke="#fff" stroke-width="2.4"/></svg></div><div class="t" style="left:720px;top:430px;width:60px;height:30px;color:#222;justify-content:flex-start;padding-top:8px;box-sizing:border-box"><span><span class="c">韓</span>K2<span class="c">聯</span></span></div><div style="position:absolute;left:2px;top:460px;width:1157px;height:44px;background:#dce3ec;"></div><div style="position:absolute;left:2px;top:505px;width:1157px;height:28px;background:#fff;"></div><div style="position:absolute;left:525px;top:505px;width:227px;height:28px;background:#fdf9f6;"></div><div style="position:absolute;left:753px;top:505px;width:243px;height:28px;background:#f0f8fc;"></div><div style="position:absolute;left:3px;top:505px;width:90px;height:28px;background:#0041ae;"></div><div style="position:absolute;left:2px;top:534px;width:1157px;height:28px;background:#f0f0f0;"></div><div style="position:absolute;left:525px;top:534px;width:227px;height:28px;background:#fdf9f6;"></div><div style="position:absolute;left:753px;top:534px;width:243px;height:28px;background:#f0f8fc;"></div><div style="position:absolute;left:3px;top:534px;width:90px;height:28px;background:#0041ae;"></div><div style="position:absolute;left:2px;top:563px;width:1157px;height:28px;background:#fff;"></div><div style="position:absolute;left:525px;top:563px;width:227px;height:28px;background:#fdf9f6;"></div><div style="position:absolute;left:753px;top:563px;width:243px;height:28px;background:#f0f8fc;"></div><div style="position:absolute;left:3px;top:563px;width:90px;height:28px;background:#0041ae;"></div><div style="position:absolute;left:2px;top:592px;width:1157px;height:28px;background:#f0f0f0;"></div><div style="position:absolute;left:525px;top:592px;width:227px;height:28px;background:#fdf9f6;"></div><div style="position:absolute;left:753px;top:592px;width:243px;height:28px;background:#f0f8fc;"></div><div style="position:absolute;left:3px;top:592px;width:90px;height:28px;background:#0041ae;"></div><div style="position:absolute;left:2px;top:621px;width:1157px;height:28px;background:#fff;"></div><div style="position:absolute;left:525px;top:621px;width:227px;height:28px;background:#fdf9f6;"></div><div style="position:absolute;left:753px;top:621px;width:243px;height:28px;background:#f0f8fc;"></div><div style="position:absolute;left:3px;top:621px;width:90px;height:28px;background:#0041ae;"></div><div style="position:absolute;left:2px;top:650px;width:1157px;height:28px;background:#f0f0f0;"></div><div style="position:absolute;left:525px;top:650px;width:227px;height:28px;background:#fdf9f6;"></div><div style="position:absolute;left:753px;top:650px;width:243px;height:28px;background:#f0f8fc;"></div><div style="position:absolute;left:3px;top:650px;width:90px;height:28px;background:#0041ae;"></div><div style="position:absolute;left:2px;top:679px;width:1157px;height:29px;background:#fff;"></div><div style="position:absolute;left:525px;top:679px;width:227px;height:29px;background:#fdf9f6;"></div><div style="position:absolute;left:753px;top:679px;width:243px;height:29px;background:#f0f8fc;"></div><div style="position:absolute;left:3px;top:679px;width:90px;height:29px;background:#0041ae;"></div><div style="position:absolute;left:2px;top:709px;width:1157px;height:28px;background:#f0f0f0;"></div><div style="position:absolute;left:525px;top:709px;width:227px;height:28px;background:#fdf9f6;"></div><div style="position:absolute;left:753px;top:709px;width:243px;height:28px;background:#f0f8fc;"></div><div style="position:absolute;left:3px;top:709px;width:90px;height:28px;background:#0041ae;"></div><div style="position:absolute;left:2px;top:738px;width:1157px;height:28px;background:#fff;"></div><div style="position:absolute;left:525px;top:738px;width:227px;height:28px;background:#fdf9f6;"></div><div style="position:absolute;left:753px;top:738px;width:243px;height:28px;background:#f0f8fc;"></div><div style="position:absolute;left:3px;top:738px;width:90px;height:28px;background:#0041ae;"></div><div style="position:absolute;left:2px;top:767px;width:1157px;height:28px;background:#f0f0f0;"></div><div style="position:absolute;left:525px;top:767px;width:227px;height:28px;background:#fdf9f6;"></div><div style="position:absolute;left:753px;top:767px;width:243px;height:28px;background:#f0f8fc;"></div><div style="position:absolute;left:3px;top:767px;width:90px;height:28px;background:#0041ae;"></div><div style="position:absolute;left:2px;top:796px;width:1157px;height:28px;background:#fff;"></div><div style="position:absolute;left:2px;top:460px;width:1157px;height:1px;background:#bdbdbd;"></div><div style="position:absolute;left:2px;top:504px;width:1157px;height:1px;background:#bdbdbd;"></div><div style="position:absolute;left:2px;top:533px;width:1157px;height:1px;background:#bdbdbd;"></div><div style="position:absolute;left:2px;top:562px;width:1157px;height:1px;background:#bdbdbd;"></div><div style="position:absolute;left:2px;top:591px;width:1157px;height:1px;background:#bdbdbd;"></div><div style="position:absolute;left:2px;top:620px;width:1157px;height:1px;background:#bdbdbd;"></div><div style="position:absolute;left:2px;top:649px;width:1157px;height:1px;background:#bdbdbd;"></div><div style="position:absolute;left:2px;top:678px;width:1157px;height:1px;background:#bdbdbd;"></div><div style="position:absolute;left:2px;top:708px;width:1157px;height:1px;background:#bdbdbd;"></div><div style="position:absolute;left:2px;top:737px;width:1157px;height:1px;background:#bdbdbd;"></div><div style="position:absolute;left:2px;top:766px;width:1157px;height:1px;background:#bdbdbd;"></div><div style="position:absolute;left:2px;top:795px;width:1157px;height:1px;background:#bdbdbd;"></div><div style="position:absolute;left:2px;top:824px;width:1157px;height:1px;background:#bdbdbd;"></div><div style="position:absolute;left:524px;top:482px;width:635px;height:1px;background:#bdbdbd;"></div><div style="position:absolute;left:2px;top:460px;width:1px;height:364px;background:#bdbdbd;"></div><div style="position:absolute;left:93px;top:460px;width:1px;height:335px;background:#bdbdbd;"></div><div style="position:absolute;left:185px;top:460px;width:1px;height:335px;background:#bdbdbd;"></div><div style="position:absolute;left:277px;top:460px;width:1px;height:335px;background:#bdbdbd;"></div><div style="position:absolute;left:386px;top:460px;width:1px;height:335px;background:#bdbdbd;"></div><div style="position:absolute;left:433px;top:460px;width:1px;height:335px;background:#bdbdbd;"></div><div style="position:absolute;left:524px;top:460px;width:1px;height:335px;background:#bdbdbd;"></div><div style="position:absolute;left:585px;top:482px;width:1px;height:313px;background:#bdbdbd;"></div><div style="position:absolute;left:691px;top:482px;width:1px;height:313px;background:#bdbdbd;"></div><div style="position:absolute;left:752px;top:460px;width:1px;height:335px;background:#bdbdbd;"></div><div style="position:absolute;left:833px;top:482px;width:1px;height:313px;background:#bdbdbd;"></div><div style="position:absolute;left:914px;top:482px;width:1px;height:313px;background:#bdbdbd;"></div><div style="position:absolute;left:996px;top:460px;width:1px;height:335px;background:#bdbdbd;"></div><div style="position:absolute;left:1042px;top:482px;width:1px;height:313px;background:#bdbdbd;"></div><div style="position:absolute;left:1089px;top:482px;width:1px;height:313px;background:#bdbdbd;"></div><div style="position:absolute;left:1158px;top:460px;width:1px;height:364px;background:#bdbdbd;"></div><div class="t" style="left:3px;top:461px;width:90px;height:43px;color:#222;"><span><span class="c">类型</span></span></div><div class="t" style="left:94px;top:461px;width:91px;height:43px;color:#222;"><span><span class="c">日期</span></span></div><div class="t" style="left:186px;top:461px;width:91px;height:43px;color:#222;"><span><span class="c">主场</span></span></div><div class="t" style="left:278px;top:461px;width:108px;height:43px;color:#222;"><span><span class="c">比分</span>(<span class="c">半场</span>)</span></div><div class="t" style="left:387px;top:461px;width:46px;height:43px;color:#222;"><span><span class="c">角球</span></span></div><div class="t" style="left:434px;top:461px;width:90px;height:43px;color:#222;"><span><span class="c">客场</span></span></div><div class="t" style="left:525px;top:483px;width:60px;height:21px;color:#222;"><span><span class="c">主</span></span></div><div class="t" style="left:586px;top:483px;width:105px;height:21px;color:#222;"><span><span class="c">让球</span></span></div><div class="t" style="left:692px;top:483px;width:60px;height:21px;color:#222;"><span><span class="c">客</span></span></div><div class="t" style="left:753px;top:483px;width:80px;height:21px;color:#222;"><span><span class="c">主</span></span></div><div class="t" style="left:834px;top:483px;width:80px;height:21px;color:#222;"><span><span class="c">和</span></span></div><div class="t" style="left:915px;top:483px;width:81px;height:21px;color:#222;"><span><span class="c">客</span></span></div><div class="t" style="left:997px;top:483px;width:45px;height:21px;color:#222;"><span><span class="c">胜负</span></span></div><div class="t" style="left:1043px;top:483px;width:46px;height:21px;color:#222;"><span><span class="c">让球</span></span></div><div class="t" style="left:1090px;top:483px;width:68px;height:21px;color:#222;"><span><span class="c">进球数</span></span></div><div class="sel" style="left:571px;top:461px;width:67px;height:19px;"><span style="position:absolute;left:4px;top:0;line-height:19px">Crow*</span></div><svg style="position:absolute;left:621.5px;top:468px" width="12" height="8" viewBox="0 0 12 8"><path d="M1.2 1.2 L5.7 5.7 L10.2 1.2" fill="none" stroke="#000" stroke-width="2"/></svg><div class="sel" style="left:648px;top:461px;width:56px;height:19px;"><span style="position:absolute;left:4px;top:0;line-height:19px">终指</span></div><svg style="position:absolute;left:687.5px;top:468px" width="12" height="8" viewBox="0 0 12 8"><path d="M1.2 1.2 L5.7 5.7 L10.2 1.2" fill="none" stroke="#000" stroke-width="2"/></svg><div class="sel" style="left:802px;top:461px;width:77px;height:19px;"><span style="position:absolute;left:4px;top:0;line-height:19px">平均值</span></div><svg style="position:absolute;left:861.5px;top:468px" width="12" height="8" viewBox="0 0 12 8"><path d="M1.2 1.2 L5.7 5.7 L10.2 1.2" fill="none" stroke="#000" stroke-width="2"/></svg><div class="sel" style="left:889px;top:461px;width:56px;height:19px;"><span style="position:absolute;left:4px;top:0;line-height:19px">终指</span></div><svg style="position:absolute;left:928.5px;top:468px" width="12" height="8" viewBox="0 0 12 8"><path d="M1.2 1.2 L5.7 5.7 L10.2 1.2" fill="none" stroke="#000" stroke-width="2"/></svg><div class="sel" style="left:1048px;top:461px;width:56px;height:19px;"><span style="position:absolute;left:4px;top:0;line-height:19px">全场</span></div><svg style="position:absolute;left:1087.5px;top:468px" width="12" height="8" viewBox="0 0 12 8"><path d="M1.2 1.2 L5.7 5.7 L10.2 1.2" fill="none" stroke="#000" stroke-width="2"/></svg><div class="t" style="left:3px;top:505px;width:90px;height:28px;color:#fff;"><span><span class="c">韓</span>K<span class="c">聯</span></span></div><div class="t" style="left:94px;top:505px;width:91px;height:28px;color:#222;"><span>25-07-26</span></div><div class="t" style="left:186px;top:505px;width:91px;height:28px;color:#222;"><span><span class="c">水原</span>FC</span></div><div class="t" style="left:278px;top:505px;width:108px;height:28px;color:#222;"><span><span style="color:#ff0000">2-1</span>(2-1)</span></div><div class="t" style="left:387px;top:505px;width:46px;height:28px;color:#222;"><span>6-3</span></div><div class="t" style="left:434px;top:505px;width:90px;height:28px;color:#008000;"><span>FC<span class="c">安養</span></span></div><div class="t" style="left:525px;top:505px;width:60px;height:28px;color:#222;"><span>0.91</span></div><div class="t" style="left:586px;top:505px;width:105px;height:28px;color:#222;"><span><span class="c">平</span>/<span class="c">半</span></span></div><div class="t" style="left:692px;top:505px;width:60px;height:28px;color:#222;"><span>0.98</span></div><div class="t" style="left:753px;top:505px;width:80px;height:28px;color:#222;"><span>2.25</span></div><div class="t" style="left:834px;top:505px;width:80px;height:28px;color:#222;"><span>3.38</span></div><div class="t" style="left:915px;top:505px;width:81px;height:28px;color:#222;"><span>2.91</span></div><div class="t" style="left:997px;top:505px;width:45px;height:28px;color:#0000ff;"><span><span class="c">負</span></span></div><div class="t" style="left:1043px;top:505px;width:46px;height:28px;color:#0000ff;"><span><span class="c">輸</span></span></div><div class="t" style="left:1090px;top:505px;width:68px;height:28px;color:#ff0000;"><span><span class="c">大</span></span></div><div class="t" style="left:3px;top:534px;width:90px;height:28px;color:#fff;"><span><span class="c">韓</span>K<span class="c">聯</span></span></div><div class="t" style="left:94px;top:534px;width:91px;height:28px;color:#222;"><span>25-07-22</span></div><div class="t" style="left:186px;top:534px;width:91px;height:28px;color:#008000;"><span>FC<span class="c">安養</span></span></div><div class="t" style="left:278px;top:534px;width:108px;height:28px;color:#222;"><span><span style="color:#ff0000">4-0</span>(2-0)</span></div><div class="t" style="left:387px;top:534px;width:46px;height:28px;color:#222;"><span>5-3</span></div><div class="t" style="left:434px;top:534px;width:90px;height:28px;color:#222;"><span><span class="c">大邱</span>FC<span class="rc">1</span></span></div><div class="t" style="left:525px;top:534px;width:60px;height:28px;color:#222;"><span>0.89</span></div><div class="t" style="left:586px;top:534px;width:105px;height:28px;color:#222;"><span><span class="c">平</span>/<span class="c">半</span></span></div><div class="t" style="left:692px;top:534px;width:60px;height:28px;color:#222;"><span>1.00</span></div><div class="t" style="left:753px;top:534px;width:80px;height:28px;color:#222;"><span>2.11</span></div><div class="t" style="left:834px;top:534px;width:80px;height:28px;color:#222;"><span>3.36</span></div><div class="t" style="left:915px;top:534px;width:81px;height:28px;color:#222;"><span>3.20</span></div><div class="t" style="left:997px;top:534px;width:45px;height:28px;color:#ff0000;"><span><span class="c">勝</span></span></div><div class="t" style="left:1043px;top:534px;width:46px;height:28px;color:#ff0000;"><span><span class="c">贏</span></span></div><div class="t" style="left:1090px;top:534px;width:68px;height:28px;color:#ff0000;"><span><span class="c">大</span></span></div><div class="t" style="left:3px;top:563px;width:90px;height:28px;color:#fff;"><span><span class="c">韓</span>K<span class="c">聯</span></span></div><div class="t" style="left:94px;top:563px;width:91px;height:28px;color:#222;"><span>25-07-19</span></div><div class="t" style="left:186px;top:563px;width:91px;height:28px;color:#222;"><span><span class="c">濟州</span>SK</span></div><div class="t" style="left:278px;top:563px;width:108px;height:28px;color:#222;"><span><span style="color:#ff0000">2-0</span>(0-0)</span></div><div class="t" style="left:387px;top:563px;width:46px;height:28px;color:#222;"><span>3-4</span></div><div class="t" style="left:434px;top:563px;width:90px;height:28px;color:#008000;"><span>FC<span class="c">安養</span></span></div><div class="t" style="left:525px;top:563px;width:60px;height:28px;color:#222;"><span>0.91</span></div><div class="t" style="left:586px;top:563px;width:105px;height:28px;color:#222;"><span><span class="c">平</span>/<span class="c">半</span></span></div><div class="t" style="left:692px;top:563px;width:60px;height:28px;color:#222;"><span>0.98</span></div><div class="t" style="left:753px;top:563px;width:80px;height:28px;color:#222;"><span>2.22</span></div><div class="t" style="left:834px;top:563px;width:80px;height:28px;color:#222;"><span>3.17</span></div><div class="t" style="left:915px;top:563px;width:81px;height:28px;color:#222;"><span>3.11</span></div><div class="t" style="left:997px;top:563px;width:45px;height:28px;color:#0000ff;"><span><span class="c">負</span></span></div><div class="t" style="left:1043px;top:563px;width:46px;height:28px;color:#0000ff;"><span><span class="c">輸</span></span></div><div class="t" style="left:1090px;top:563px;width:68px;height:28px;color:#0000ff;"><span><span class="c">小</span></span></div><div class="t" style="left:3px;top:592px;width:90px;height:28px;color:#fff;"><span><span class="c">韓</span>K<span class="c">聯</span></span></div><div class="t" style="left:94px;top:592px;width:91px;height:28px;color:#222;"><span>25-06-28</span></div><div class="t" style="left:186px;top:592px;width:91px;height:28px;color:#222;"><span><span class="rc">1</span><span style="color:#008000">FC<span class="c">安養</span></span></span></div><div class="t" style="left:278px;top:592px;width:108px;height:28px;color:#222;"><span><span style="color:#ff0000">1-2</span>(1-2)</span></div><div class="t" style="left:387px;top:592px;width:46px;height:28px;color:#222;"><span>2-4</span></div><div class="t" style="left:434px;top:592px;width:90px;height:28px;color:#222;"><span>FC<span class="c">光州</span></span></div><div class="t" style="left:525px;top:592px;width:60px;height:28px;color:#222;"><span>0.78</span></div><div class="t" style="left:586px;top:592px;width:105px;height:28px;color:#222;"><span><span class="c">平手</span></span></div><div class="t" style="left:692px;top:592px;width:60px;height:28px;color:#222;"><span>1.12</span></div><div class="t" style="left:753px;top:592px;width:80px;height:28px;color:#222;"><span>2.54</span></div><div class="t" style="left:834px;top:592px;width:80px;height:28px;color:#222;"><span>3.17</span></div><div class="t" style="left:915px;top:592px;width:81px;height:28px;color:#222;"><span>2.67</span></div><div class="t" style="left:997px;top:592px;width:45px;height:28px;color:#0000ff;"><span><span class="c">負</span></span></div><div class="t" style="left:1043px;top:592px;width:46px;height:28px;color:#0000ff;"><span><span class="c">輸</span></span></div><div class="t" style="left:1090px;top:592px;width:68px;height:28px;color:#ff0000;"><span><span class="c">大</span></span></div><div class="t" style="left:3px;top:621px;width:90px;height:28px;color:#fff;"><span><span class="c">韓</span>K<span class="c">聯</span></span></div><div class="t" style="left:94px;top:621px;width:91px;height:28px;color:#222;"><span>25-06-22</span></div><div class="t" style="left:186px;top:621px;width:91px;height:28px;color:#222;"><span><span class="c">金泉尚武</span></span></div><div class="t" style="left:278px;top:621px;width:108px;height:28px;color:#222;"><span><span style="color:#ff0000">1-0</span>(0-0)</span></div><div class="t" style="left:387px;top:621px;width:46px;height:28px;color:#222;"><span>8-4</span></div><div class="t" style="left:434px;top:621px;width:90px;height:28px;color:#008000;"><span>FC<span class="c">安養</span></span></div><div class="t" style="left:525px;top:621px;width:60px;height:28px;color:#222;"><span>0.99</span></div><div class="t" style="left:586px;top:621px;width:105px;height:28px;color:#222;"><span><span class="c">半球</span></span></div><div class="t" style="left:692px;top:621px;width:60px;height:28px;color:#222;"><span>0.90</span></div><div class="t" style="left:753px;top:621px;width:80px;height:28px;color:#222;"><span>1.93</span></div><div class="t" style="left:834px;top:621px;width:80px;height:28px;color:#222;"><span>3.53</span></div><div class="t" style="left:915px;top:621px;width:81px;height:28px;color:#222;"><span>3.53</span></div><div class="t" style="left:997px;top:621px;width:45px;height:28px;color:#0000ff;"><span><span class="c">負</span></span></div><div class="t" style="left:1043px;top:621px;width:46px;height:28px;color:#0000ff;"><span><span class="c">輸</span></span></div><div class="t" style="left:1090px;top:621px;width:68px;height:28px;color:#0000ff;"><span><span class="c">小</span></span></div><div class="t" style="left:3px;top:650px;width:90px;height:28px;color:#fff;"><span><span class="c">韓</span>K<span class="c">聯</span></span></div><div class="t" style="left:94px;top:650px;width:91px;height:28px;color:#222;"><span>25-06-14</span></div><div class="t" style="left:186px;top:650px;width:91px;height:28px;color:#222;"><span><span class="c">水原</span>FC</span></div><div class="t" style="left:278px;top:650px;width:108px;height:28px;color:#222;"><span><span style="color:#ff0000">1-2</span>(1-0)</span></div><div class="t" style="left:387px;top:650px;width:46px;height:28px;color:#222;"><span>0-4</span></div><div class="t" style="left:434px;top:650px;width:90px;height:28px;color:#008000;"><span>FC<span class="c">安養</span></span></div><div class="t" style="left:525px;top:650px;width:60px;height:28px;color:#222;"><span>1.09</span></div><div class="t" style="left:586px;top:650px;width:105px;height:28px;color:#222;"><span><span class="c">平</span>/<span class="c">半</span></span></div><div class="t" style="left:692px;top:650px;width:60px;height:28px;color:#222;"><span>0.80</span></div><div class="t" style="left:753px;top:650px;width:80px;height:28px;color:#222;"><span>2.31</span></div><div class="t" style="left:834px;top:650px;width:80px;height:28px;color:#222;"><span>3.18</span></div><div class="t" style="left:915px;top:650px;width:81px;height:28px;color:#222;"><span>2.95</span></div><div class="t" style="left:997px;top:650px;width:45px;height:28px;color:#ff0000;"><span><span class="c">勝</span></span></div><div class="t" style="left:1043px;top:650px;width:46px;height:28px;color:#ff0000;"><span><span class="c">贏</span></span></div><div class="t" style="left:1090px;top:650px;width:68px;height:28px;color:#ff0000;"><span><span class="c">大</span></span></div><div class="t" style="left:3px;top:679px;width:90px;height:29px;color:#fff;"><span><span class="c">韓</span>K<span class="c">聯</span></span></div><div class="t" style="left:94px;top:679px;width:91px;height:29px;color:#222;"><span>25-05-31</span></div><div class="t" style="left:186px;top:679px;width:91px;height:29px;color:#008000;"><span>FC<span class="c">安養</span></span></div><div class="t" style="left:278px;top:679px;width:108px;height:29px;color:#222;"><span><span style="color:#ff0000">1-1</span>(0-1)</span></div><div class="t" style="left:387px;top:679px;width:46px;height:29px;color:#222;"><span>2-3</span></div><div class="t" style="left:434px;top:679px;width:90px;height:29px;color:#222;"><span><span class="c">大田市民</span></span></div><div class="t" style="left:525px;top:679px;width:60px;height:29px;color:#222;"><span>0.90</span></div><div class="t" style="left:586px;top:679px;width:105px;height:29px;color:#222;"><span><span class="c">平手</span></span></div><div class="t" style="left:692px;top:679px;width:60px;height:29px;color:#222;"><span>0.99</span></div><div class="t" style="left:753px;top:679px;width:80px;height:29px;color:#222;"><span>2.55</span></div><div class="t" style="left:834px;top:679px;width:80px;height:29px;color:#222;"><span>3.08</span></div><div class="t" style="left:915px;top:679px;width:81px;height:29px;color:#222;"><span>2.71</span></div><div class="t" style="left:997px;top:679px;width:45px;height:29px;color:#008000;"><span><span class="c">平</span></span></div><div class="t" style="left:1043px;top:679px;width:46px;height:29px;color:#008000;"><span><span class="c">走</span></span></div><div class="t" style="left:1090px;top:679px;width:68px;height:29px;color:#0000ff;"><span><span class="c">小</span></span></div><div class="t" style="left:3px;top:709px;width:90px;height:28px;color:#fff;"><span><span class="c">韓</span>K<span class="c">聯</span></span></div><div class="t" style="left:94px;top:709px;width:91px;height:28px;color:#222;"><span>25-05-28</span></div><div class="t" style="left:186px;top:709px;width:91px;height:28px;color:#222;"><span>FC<span class="c">江原</span></span></div><div class="t" style="left:278px;top:709px;width:108px;height:28px;color:#222;"><span><span style="color:#ff0000">1-3</span>(0-2)</span></div><div class="t" style="left:387px;top:709px;width:46px;height:28px;color:#222;"><span>9-2</span></div><div class="t" style="left:434px;top:709px;width:90px;height:28px;color:#008000;"><span>FC<span class="c">安養</span></span></div><div class="t" style="left:525px;top:709px;width:60px;height:28px;color:#222;"><span>1.16</span></div><div class="t" style="left:586px;top:709px;width:105px;height:28px;color:#222;"><span><span class="c">平</span>/<span class="c">半</span></span></div><div class="t" style="left:692px;top:709px;width:60px;height:28px;color:#222;"><span>0.75</span></div><div class="t" style="left:753px;top:709px;width:80px;height:28px;color:#222;"><span>2.32</span></div><div class="t" style="left:834px;top:709px;width:80px;height:28px;color:#222;"><span>2.98</span></div><div class="t" style="left:915px;top:709px;width:81px;height:28px;color:#222;"><span>3.15</span></div><div class="t" style="left:997px;top:709px;width:45px;height:28px;color:#ff0000;"><span><span class="c">勝</span></span></div><div class="t" style="left:1043px;top:709px;width:46px;height:28px;color:#ff0000;"><span><span class="c">贏</span></span></div><div class="t" style="left:1090px;top:709px;width:68px;height:28px;color:#ff0000;"><span><span class="c">大</span></span></div><div class="t" style="left:3px;top:738px;width:90px;height:28px;color:#fff;"><span><span class="c">韓</span>K<span class="c">聯</span></span></div><div class="t" style="left:94px;top:738px;width:91px;height:28px;color:#222;"><span>25-05-23</span></div><div class="t" style="left:186px;top:738px;width:91px;height:28px;color:#008000;"><span>FC<span class="c">安養</span></span></div><div class="t" style="left:278px;top:738px;width:108px;height:28px;color:#222;"><span><span style="color:#ff0000">0-2</span>(0-0)</span></div><div class="t" style="left:387px;top:738px;width:46px;height:28px;color:#222;"><span>3-3</span></div><div class="t" style="left:434px;top:738px;width:90px;height:28px;color:#222;"><span><span class="c">浦項制鐵</span></span></div><div class="t" style="left:525px;top:738px;width:60px;height:28px;color:#222;"><span>0.88</span></div><div class="t" style="left:586px;top:738px;width:105px;height:28px;color:#222;"><span><span class="c">受平</span>/<span class="c">半</span></span></div><div class="t" style="left:692px;top:738px;width:60px;height:28px;color:#222;"><span>1.01</span></div><div class="t" style="left:753px;top:738px;width:80px;height:28px;color:#222;"><span>2.88</span></div><div class="t" style="left:834px;top:738px;width:80px;height:28px;color:#222;"><span>3.15</span></div><div class="t" style="left:915px;top:738px;width:81px;height:28px;color:#222;"><span>2.39</span></div><div class="t" style="left:997px;top:738px;width:45px;height:28px;color:#0000ff;"><span><span class="c">負</span></span></div><div class="t" style="left:1043px;top:738px;width:46px;height:28px;color:#0000ff;"><span><span class="c">輸</span></span></div><div class="t" style="left:1090px;top:738px;width:68px;height:28px;color:#0000ff;"><span><span class="c">小</span></span></div><div class="t" style="left:3px;top:767px;width:90px;height:28px;color:#fff;"><span><span class="c">韓</span>K<span class="c">聯</span></span></div><div class="t" style="left:94px;top:767px;width:91px;height:28px;color:#222;"><span>25-05-17</span></div><div class="t" style="left:186px;top:767px;width:91px;height:28px;color:#222;"><span><span class="c">全北汽車</span></span></div><div class="t" style="left:278px;top:767px;width:108px;height:28px;color:#222;"><span><span style="color:#ff0000">2-0</span>(2-0)</span></div><div class="t" style="left:387px;top:767px;width:46px;height:28px;color:#222;"><span>6-5</span></div><div class="t" style="left:434px;top:767px;width:90px;height:28px;color:#008000;"><span>FC<span class="c">安養</span></span></div><div class="t" style="left:525px;top:767px;width:60px;height:28px;color:#222;"><span>0.86</span></div><div class="t" style="left:586px;top:767px;width:105px;height:28px;color:#222;"><span><span class="c">半球</span></span></div><div class="t" style="left:692px;top:767px;width:60px;height:28px;color:#222;"><span>1.03</span></div><div class="t" style="left:753px;top:767px;width:80px;height:28px;color:#222;"><span>1.71</span></div><div class="t" style="left:834px;top:767px;width:80px;height:28px;color:#222;"><span>3.50</span></div><div class="t" style="left:915px;top:767px;width:81px;height:28px;color:#222;"><span>4.70</span></div><div class="t" style="left:997px;top:767px;width:45px;height:28px;color:#0000ff;"><span><span class="c">負</span></span></div><div class="t" style="left:1043px;top:767px;width:46px;height:28px;color:#0000ff;"><span><span class="c">輸</span></span></div><div class="t" style="left:1090px;top:767px;width:68px;height:28px;color:#0000ff;"><span><span class="c">小</span></span></div><div class="t" style="left:3px;top:796px;width:1155px;height:28px;color:#222;font-size:13.5px;letter-spacing:0;"><span><span class="c">近</span><span style="color:#ff0000">10</span><span class="c">场</span>,<span class="c">胜</span>3<span class="c">平</span>1<span class="c">负</span>6, <span class="c">胜率</span>:<span style="color:#ff0000">30%</span> <span class="c">让胜率</span>:<span style="color:#ff0000">30%</span> <span class="c">大率</span>:<span style="color:#ff0000">50%</span> <span class="c">单率</span>:<span style="color:#ff0000">40%</span></span></div><div style="position:absolute;left:1166px;top:0px;width:1px;height:827px;background:#ececec;"></div>
</body></html>
